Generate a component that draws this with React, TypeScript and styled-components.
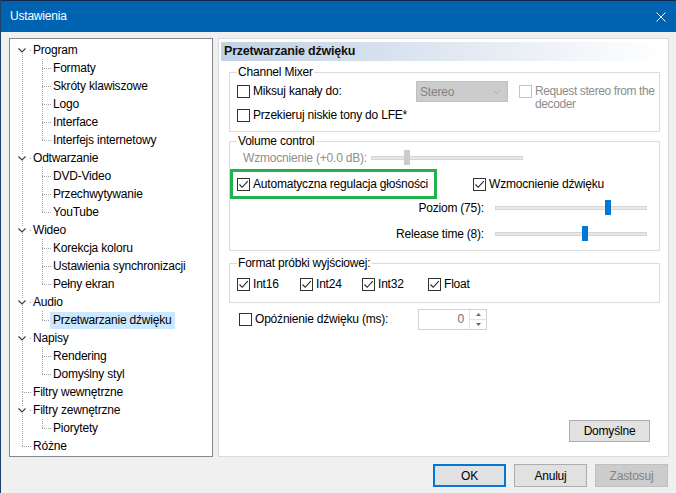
import React from 'react';
import styled, { createGlobalStyle, css } from 'styled-components';

interface TreeNode {
  label: string;
  children?: string[];
}

const tree: TreeNode[] = [
  { label: 'Program', children: ['Formaty', 'Skróty klawiszowe', 'Logo', 'Interface', 'Interfejs internetowy'] },
  { label: 'Odtwarzanie', children: ['DVD-Video', 'Przechwytywanie', 'YouTube'] },
  { label: 'Wideo', children: ['Korekcja koloru', 'Ustawienia synchronizacji', 'Pełny ekran'] },
  { label: 'Audio', children: ['Przetwarzanie dźwięku'] },
  { label: 'Napisy', children: ['Rendering', 'Domyślny styl'] },
  { label: 'Filtry wewnętrzne' },
  { label: 'Filtry zewnętrzne', children: ['Piorytety'] },
  { label: 'Różne' },
];

const SELECTED = 'Przetwarzanie dźwięku';

const GlobalStyle = createGlobalStyle`
  html, body {
    margin: 0;
    padding: 0;
    background: #f0f0f0;
  }
  body {
    font-family: "Liberation Sans", Arial, sans-serif;
    font-size: 12px;
    letter-spacing: -0.2px;
    color: #000;
  }
  * {
    box-sizing: border-box;
  }
`;

const Window = styled.div`
  width: 676px;
  height: 493px;
  display: flex;
  flex-direction: column;
  background: #f0f0f0;
  border-left: 1px solid #1d3f6b;
  overflow: hidden;
`;

const TitleBar = styled.div`
  height: 32px;
  flex: none;
  display: flex;
  align-items: center;
  justify-content: space-between;
  padding: 0 10px 0 9px;
  background: #0063b1;
  border-top: 1px solid #14284a;
  color: #fff;
`;

const TitleText = styled.span`
  line-height: 15px;
`;

const Body = styled.div`
  display: flex;
  gap: 5px;
  padding: 6px 0 0 8px;
`;

/* ---------- tree ---------- */

const TreePanel = styled.div`
  width: 204px;
  height: 419px;
  flex: none;
  background: #fff;
  border: 1px solid #828790;
  padding: 2px 0 0 2px;
`;

const TreeRow = styled.div`
  display: flex;
  align-items: center;
  height: 18px;
`;

const TreeLabel = styled.span<{ $selected?: boolean }>`
  margin-left: -2px;
  padding: 0 3px;
  line-height: 17px;
  white-space: nowrap;
  background: ${(p) => (p.$selected ? '#cce8ff' : 'transparent')};
`;

const DOT = { stroke: '#a0a0a0', strokeDasharray: '1 1', strokeWidth: 1 };

function TopGuide({ first, last, expandable }: { first: boolean; last: boolean; expandable: boolean }) {
  return (
    <svg width="20" height="18" style={{ flex: 'none' }}>
      {!first && <line x1="10.5" y1="0" x2="10.5" y2={expandable ? 6 : 9} {...DOT} />}
      {!last && <line x1="10.5" y1={expandable ? 12 : 9} x2="10.5" y2="18" {...DOT} />}
      {expandable ? (
        <>
          <line x1="18" y1="9.5" x2="20" y2="9.5" {...DOT} />
          <polyline points="6.5,7.5 10,11 13.5,7.5" fill="none" stroke="#3c3c3c" strokeWidth="1.1" />
        </>
      ) : (
        <line x1="10" y1="9.5" x2="20" y2="9.5" {...DOT} />
      )}
    </svg>
  );
}

function ChildGuide({ lastChild, parentLast }: { lastChild: boolean; parentLast: boolean }) {
  return (
    <svg width="40" height="18" style={{ flex: 'none' }}>
      {!parentLast && <line x1="10.5" y1="0" x2="10.5" y2="18" {...DOT} />}
      <line x1="30.5" y1="0" x2="30.5" y2={lastChild ? 10 : 18} {...DOT} />
      <line x1="30" y1="9.5" x2="40" y2="9.5" {...DOT} />
    </svg>
  );
}

function SettingsTree() {
  return (
    <TreePanel>
      {tree.map((node, i) => {
        const last = i === tree.length - 1;
        return (
          <React.Fragment key={node.label}>
            <TreeRow>
              <TopGuide first={i === 0} last={last} expandable={!!node.children} />
              <TreeLabel>{node.label}</TreeLabel>
            </TreeRow>
            {node.children?.map((child, j) => (
              <TreeRow key={child}>
                <ChildGuide lastChild={j === node.children!.length - 1} parentLast={last} />
                <TreeLabel $selected={child === SELECTED}>{child}</TreeLabel>
              </TreeRow>
            ))}
          </React.Fragment>
        );
      })}
    </TreePanel>
  );
}

/* ---------- page ---------- */

const Panel = styled.div`
  width: 451px;
  height: 419px;
  flex: none;
  display: flex;
  flex-direction: column;
  background: #fff;
  border: 1px solid #dadada;
  padding: 3px 3px 14px 2px;
`;

const PageHeader = styled.div`
  height: 19px;
  line-height: 19px;
  padding-left: 3px;
  font-size: 12.5px;
  font-weight: bold;
  color: #111;
  background: linear-gradient(to right, #c2d1e4 0%, #dce5f0 45%, #ffffff 100%);
`;

const Group = styled.fieldset<{ $mt: number }>`
  margin: ${(p) => p.$mt}px 5px 0 8px;
  padding: 0 6px 0 7px;
  border: 1px solid #dcdcdc;
  min-width: 0;
`;

const Legend = styled.legend`
  padding: 0 1px;
  line-height: 15px;
`;

const MixerGrid = styled.div`
  display: grid;
  grid-template-columns: 179px 103px 1fr;
  grid-template-rows: 21px 17px;
  row-gap: 5px;
  padding: 1px 0 7px;
`;

const CheckItem = styled.label<{ $disabled?: boolean; $area?: string }>`
  display: inline-flex;
  align-items: center;
  align-self: center;
  gap: 3px;
  line-height: 15px;
  white-space: nowrap;
  color: ${(p) => (p.$disabled ? '#8d8d8d' : '#000')};
  ${(p) =>
    p.$area &&
    css`
      grid-area: ${p.$area};
    `}
`;

const Box = styled.span<{ $disabled?: boolean }>`
  width: 13px;
  height: 13px;
  flex: none;
  display: flex;
  align-items: center;
  justify-content: center;
  background: #fff;
  border: 1px solid ${(p) => (p.$disabled ? '#c4c4c4' : '#333')};
`;

const RequestItem = styled.div`
  grid-column: 3;
  grid-row: 1 / 3;
  display: flex;
  align-items: flex-start;
  gap: 3px;
  padding-top: 4px;
  line-height: 13px;
  letter-spacing: -0.4px;
  white-space: nowrap;
  color: #8d8d8d;
`;

const Combo = styled.div`
  width: 92px;
  height: 21px;
  display: flex;
  align-items: center;
  justify-content: space-between;
  padding: 0 7px 0 3px;
  background: #cccccc;
  border: 1px solid #bfbfbf;
  color: #838383;
`;

const VolumeBody = styled.div`
  display: flex;
  flex-direction: column;
  padding: 1px 0 8px;
`;

const GainRow = styled.div`
  display: grid;
  grid-template-columns: 134px 152px;
  align-items: center;
  height: 16px;
`;

const MutedText = styled.span`
  padding-left: 6px;
  color: #8d8d8d;
  white-space: nowrap;
`;

const AutoRow = styled.div`
  display: grid;
  grid-template-columns: 236px auto;
  align-items: center;
  height: 30px;
  margin-top: 3px;
`;

const Highlight = styled.div`
  justify-self: start;
  height: 30px;
  margin-left: -7px;
  display: flex;
  align-items: center;
  padding: 0 6px 0 4px;
  border: 3px solid #22b14c;
`;

const LevelGrid = styled.div`
  display: grid;
  grid-template-columns: 247px 152px;
  grid-auto-rows: 16px;
  column-gap: 11px;
  row-gap: 10px;
  align-items: center;
  margin-top: 1px;
`;

const LevelLabel = styled.span`
  text-align: right;
  white-space: nowrap;
`;

const SliderBox = styled.div`
  position: relative;
  height: 16px;
  display: flex;
  align-items: center;
`;

const Track = styled.div`
  width: 100%;
  height: 4px;
  background: #e7e7e7;
  border: 1px solid #d6d6d6;
`;

const Thumb = styled.div<{ $disabled?: boolean }>`
  position: absolute;
  top: 0;
  width: 6px;
  height: 15px;
  background: ${(p) => (p.$disabled ? '#cccccc' : '#0078d7')};
`;

const FormatRow = styled.div`
  display: grid;
  grid-template-columns: 63px 62px 66px auto;
  height: 17px;
  margin: 5px 0 9px;
`;

const DelayRow = styled.div`
  display: grid;
  grid-template-columns: 179px 69px;
  align-items: center;
  height: 21px;
  margin: 6px 0 0 18px;
`;

const SpinBox = styled.div`
  height: 21px;
  display: flex;
  background: #fff;
  border: 1px solid #d0d0d0;
`;

const SpinValue = styled.span`
  flex: 1;
  text-align: right;
  padding-right: 5px;
  line-height: 19px;
  color: #6d6d6d;
`;

const SpinButtons = styled.div`
  width: 17px;
  display: flex;
  flex-direction: column;
  border-left: 1px solid #e3e3e3;
`;

const SpinButton = styled.div<{ $down?: boolean }>`
  flex: 1;
  display: flex;
  align-items: center;
  justify-content: center;
  ${(p) =>
    p.$down &&
    css`
      border-top: 1px solid #e3e3e3;
    `}
`;

const Spacer = styled.div`
  flex: 1;
`;

const Button = styled.button<{ $default?: boolean; $width?: number; $height?: number }>`
  width: ${(p) => p.$width ?? 73}px;
  height: ${(p) => p.$height ?? 23}px;
  padding: 0;
  font: inherit;
  letter-spacing: inherit;
  color: #000;
  background: #e1e1e1;
  border: 1px solid #adadad;
  ${(p) =>
    p.$default &&
    css`
      border: 2px solid #0078d7;
    `}
  &:disabled {
    color: #838383;
    background: #cccccc;
    border-color: #bfbfbf;
  }
`;

const PanelButton = styled(Button)`
  align-self: flex-end;
  margin-right: 15px;
`;

const Footer = styled.div`
  display: flex;
  justify-content: flex-end;
  gap: 8px;
  padding: 7px 8px 0 0;
`;

function CheckMark() {
  return (
    <svg width="11" height="11" viewBox="0 0 11 11">
      <polyline points="1.5,5.5 4.2,8.3 9.8,2.2" fill="none" stroke="#222" strokeWidth="1.1" />
    </svg>
  );
}

function Check({ label, checked, disabled, area }: { label: string; checked?: boolean; disabled?: boolean; area?: string }) {
  return (
    <CheckItem $disabled={disabled} $area={area}>
      <Box $disabled={disabled}>{checked && <CheckMark />}</Box>
      {label}
    </CheckItem>
  );
}

function Slider({ pos, disabled }: { pos: number; disabled?: boolean }) {
  return (
    <SliderBox>
      <Track />
      <Thumb $disabled={disabled} style={{ left: Math.round(pos * 146) }} />
    </SliderBox>
  );
}

export default function App() {
  return (
    <>
      <GlobalStyle />
      <Window>
        <TitleBar>
          <TitleText>Ustawienia</TitleText>
          <svg width="10" height="10" viewBox="0 0 10 10">
            <path d="M0.5 0.5 L9.5 9.5 M9.5 0.5 L0.5 9.5" stroke="#fff" strokeWidth="1" />
          </svg>
        </TitleBar>
        <Body>
          <SettingsTree />
          <Panel>
            <PageHeader>Przetwarzanie dźwięku</PageHeader>

            <Group $mt={4}>
              <Legend>Channel Mixer</Legend>
              <MixerGrid>
                <Check label="Miksuj kanały do:" />
                <Combo>
                  Stereo
                  <svg width="7" height="4" viewBox="0 0 7 4">
                    <polyline points="0.5,0.5 3.5,3.5 6.5,0.5" fill="none" stroke="#a8a8a8" strokeWidth="1" />
                  </svg>
                </Combo>
                <RequestItem>
                  <Box $disabled />
                  <span>
                    Request stereo from the
                    <br />
                    decoder
                  </span>
                </RequestItem>
                <Check label="Przekieruj niskie tony do LFE*" area="2 / 1 / 3 / 3" />
              </MixerGrid>
            </Group>

            <Group $mt={2}>
              <Legend>Volume control</Legend>
              <VolumeBody>
                <GainRow>
                  <MutedText>Wzmocnienie (+0.0 dB):</MutedText>
                  <Slider pos={0.226} disabled />
                </GainRow>
                <AutoRow>
                  <Highlight>
                    <Check label="Automatyczna regulacja głośności" checked />
                  </Highlight>
                  <Check label="Wzmocnienie dźwięku" checked />
                </AutoRow>
                <LevelGrid>
                  <LevelLabel>Poziom (75):</LevelLabel>
                  <Slider pos={0.75} />
                  <LevelLabel>Release time (8):</LevelLabel>
                  <Slider pos={0.596} />
                </LevelGrid>
              </VolumeBody>
            </Group>

            <Group $mt={5}>
              <Legend>Format próbki wyjściowej:</Legend>
              <FormatRow>
                <Check label="Int16" checked />
                <Check label="Int24" checked />
                <Check label="Int32" checked />
                <Check label="Float" checked />
              </FormatRow>
            </Group>

            <DelayRow>
              <Check label="Opóźnienie dźwięku (ms):" />
              <SpinBox>
                <SpinValue>0</SpinValue>
                <SpinButtons>
                  <SpinButton>
                    <svg width="5" height="3" viewBox="0 0 5 3">
                      <polygon points="0,3 2.5,0 5,3" fill="#6a6a6a" />
                    </svg>
                  </SpinButton>
                  <SpinButton $down>
                    <svg width="5" height="3" viewBox="0 0 5 3">
                      <polygon points="0,0 2.5,3 5,0" fill="#6a6a6a" />
                    </svg>
                  </SpinButton>
                </SpinButtons>
              </SpinBox>
            </DelayRow>

            <Spacer />
            <PanelButton $width={81} $height={22}>
              Domyślne
            </PanelButton>
          </Panel>
        </Body>
        <Footer>
          <Button $default>OK</Button>
          <Button>Anuluj</Button>
          <Button disabled>Zastosuj</Button>
        </Footer>
      </Window>
    </>
  );
}
